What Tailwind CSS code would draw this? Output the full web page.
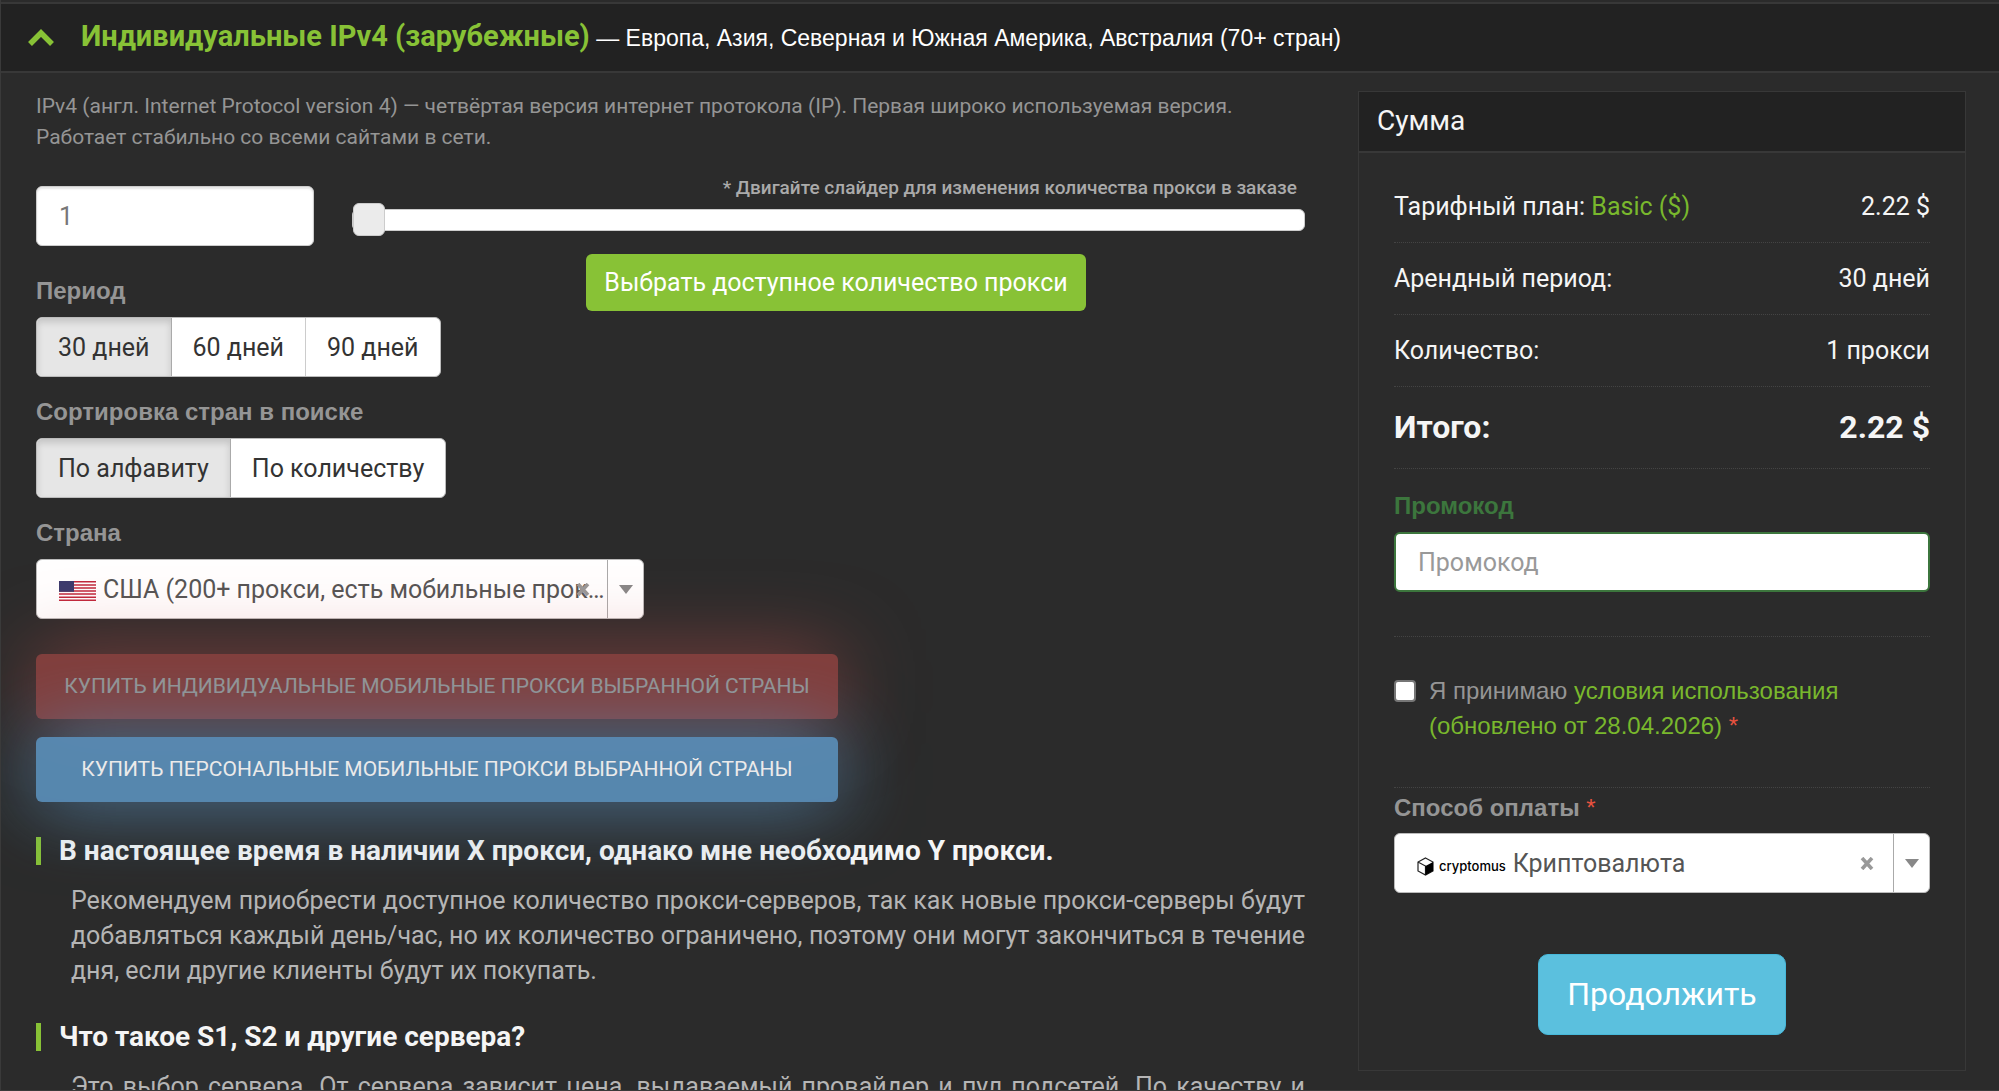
<!DOCTYPE html>
<html lang="ru">
<head>
<meta charset="utf-8">
<title>Индивидуальные IPv4</title>
<script src="https://cdn.jsdelivr.net/npm/@tailwindcss/browser@4"></script>
</head>
<body class="bg-[#2b2b2b] font-['Roboto','Liberation_Sans',sans-serif] text-[25px] leading-[35px] text-[#959595]">
<main class="h-screen overflow-hidden border-l border-b border-[#3a3a3a] pt-[2px]">
  <header class="flex h-[71px] items-center border-y-2 border-[#383838] bg-[#222] pl-[27px] text-white">
    <svg class="mr-[27px] h-[17px] w-[26px]" viewBox="0 0 26 17"><path d="M2 15 13 4 24 15" fill="none" stroke="#88c236" stroke-width="5.5"/></svg>
    <h1 class="font-['Liberation_Sans',sans-serif] text-[23px]"><span class="font-['Roboto',sans-serif] text-[29px] font-bold text-[#88c236]">Индивидуальные IPv4 (зарубежные)</span> — Европа, Азия, Северная и Южная Америка, Австралия (70+ стран)</h1>
  </header>
  <div class="flex items-start gap-[53px] pl-[35px] pr-[33px] pt-[18px]">
    <section class="min-w-0 flex-1">
      <p class="text-[21px] leading-[31px]">IPv4 (англ. Internet Protocol version 4) — четвёртая версия интернет протокола (IP). Первая широко используемая версия.<br>Работает стабильно со всеми сайтами в сети.</p>
      <div class="mt-[33px] flex items-start gap-[38px]">
        <input aria-label="Количество прокси" value="1" class="h-[60px] w-[278px] rounded-[6px] border border-[#ccc] bg-white px-[22px] text-[#777] shadow-[inset_0_2px_2px_rgba(0,0,0,0.1)]">
        <div class="-mt-[13px] flex flex-1 flex-col">
          <label for="amount" class="pr-[8px] text-right text-[19px] font-medium leading-[30px] text-[#aaa]">* Двигайте слайдер для изменения количества прокси в заказе</label>
          <input id="amount" type="range" min="1" max="200" value="1" class="h-[33px] w-full appearance-none bg-transparent [&::-webkit-slider-runnable-track]:h-[22px] [&::-webkit-slider-runnable-track]:rounded-[6px] [&::-webkit-slider-runnable-track]:border [&::-webkit-slider-runnable-track]:border-[#ccc] [&::-webkit-slider-runnable-track]:bg-white [&::-webkit-slider-thumb]:-mt-[7px] [&::-webkit-slider-thumb]:h-[33px] [&::-webkit-slider-thumb]:w-[32px] [&::-webkit-slider-thumb]:appearance-none [&::-webkit-slider-thumb]:rounded-[6px] [&::-webkit-slider-thumb]:border [&::-webkit-slider-thumb]:border-[#ccc] [&::-webkit-slider-thumb]:bg-[#ebebeb]">
          <div class="mt-[18px] flex justify-center pl-[15px]"><button class="h-[57px] rounded-[6px] bg-[#88c236] px-[18px] text-white">Выбрать доступное количество прокси</button></div>
        </div>
      </div>
      <div class="-mt-[38px]">
        <h2 class="font-['Liberation_Sans',sans-serif] text-[24px] font-bold">Период</h2>
        <div class="mt-[9px] flex h-[60px] w-fit overflow-hidden rounded-[6px] border border-[#bbb] bg-white text-[#333]">
          <button class="border-r border-[#aaa] bg-[#e6e6e6] px-[21px] shadow-[inset_0_4px_7px_rgba(0,0,0,0.15)]">30 дней</button>
          <button class="border-r border-[#ccc] px-[21px]">60 дней</button>
          <button class="px-[21px]">90 дней</button>
        </div>
        <h2 class="mt-[17px] font-['Liberation_Sans',sans-serif] text-[24px] font-bold">Сортировка стран в поиске</h2>
        <div class="mt-[9px] flex h-[60px] w-fit overflow-hidden rounded-[6px] border border-[#bbb] bg-white text-[#333]">
          <button class="border-r border-[#aaa] bg-[#e6e6e6] px-[21px] shadow-[inset_0_4px_7px_rgba(0,0,0,0.15)]">По алфавиту</button>
          <button class="px-[21px]">По количеству</button>
        </div>
        <h2 class="mt-[17px] font-['Liberation_Sans',sans-serif] text-[24px] font-bold">Страна</h2>
        <div class="relative mt-[9px] flex h-[60px] w-[608px] items-center rounded-[6px] border border-[#bbb] bg-white pl-[22px] text-[#555]">
          <svg class="mr-[7px] mt-[3px] h-[20px] w-[37px] shrink-0" viewBox="0 0 37 20" preserveAspectRatio="none"><path fill="#fff" d="M0 0h37v20H0z"/><path stroke="#c0283c" stroke-width="1.54" d="M0 .8h37M0 3.9h37M0 6.9h37M0 10h37M0 13.1h37M0 16.2h37M0 19.2h37"/><path fill="#3c3b6e" d="M0 0h15v10.8H0z"/></svg>
          <select aria-label="Страна" class="h-full w-[504px] appearance-none overflow-hidden text-ellipsis whitespace-nowrap"><option>США (200+ прокси, есть мобильные прокси)</option></select>
          <button aria-label="Очистить" class="absolute left-[539px] top-0 flex h-[58px] w-[14px] items-center"><svg class="h-[13px] w-[14px]" viewBox="0 0 14 13"><path d="m2 1 10 11M12 1 2 12" stroke="#999" stroke-width="3.6"/></svg></button>
          <span class="pointer-events-none absolute inset-y-0 right-0 flex w-[36px] items-center justify-center border-l border-[#aaa]"><svg class="h-[9px] w-[14px]" viewBox="0 0 14 9"><path d="M0 0h14L7 9z" fill="#888"/></svg></span>
        </div>
      </div>
      <button class="relative mt-[35px] block h-[65px] w-[802px] rounded-[6px] bg-[#d9534f] text-[21px] text-white opacity-50 shadow-[0_0_80px_#d9534f]">КУПИТЬ ИНДИВИДУАЛЬНЫЕ МОБИЛЬНЫЕ ПРОКСИ ВЫБРАННОЙ СТРАНЫ</button>
      <button class="relative mt-[18px] block h-[65px] w-[802px] rounded-[6px] bg-[#5b91bd] text-[21px] text-white opacity-90 shadow-[0_0_80px_rgba(91,145,189,0.9)]">КУПИТЬ ПЕРСОНАЛЬНЫЕ МОБИЛЬНЫЕ ПРОКСИ ВЫБРАННОЙ СТРАНЫ</button>
      <h3 class="mt-[35px] border-l-[5px] border-[#88c236] pl-[18px] text-[28px] font-bold leading-[28px] text-[#f5f5f5]">В настоящее время в наличии X прокси, однако мне необходимо Y прокси.</h3>
      <p class="mt-[18px] pl-[35px] text-justify text-[#b5b5b5]">Рекомендуем приобрести доступное количество прокси-серверов, так как новые прокси-серверы будут добавляться каждый день/час, но их количество ограничено, поэтому они могут закончиться в течение дня, если другие клиенты будут их покупать.</p>
      <h3 class="mt-[35px] border-l-[5px] border-[#88c236] pl-[18px] text-[28px] font-bold leading-[28px] text-[#f5f5f5]">Что такое S1, S2 и другие сервера?</h3>
      <p class="mt-[18px] pl-[35px] text-justify text-[#b5b5b5]">Это выбор сервера. От сервера зависит цена, выдаваемый провайдер и пул подсетей. По качеству и скорости работы серверы не отличаются друг от друга.</p>
    </section>
    <aside class="w-[608px] border border-[#383838]">
      <h2 class="h-[61px] border-b-2 border-[#383838] bg-[#222] pl-[18px] text-[28px] leading-[58px] text-[#f5f5f5]">Сумма</h2>
      <div class="px-[35px] pt-[18px] text-[#f5f5f5]">
        <div class="flex h-[72px] items-center justify-between border-b border-dotted border-[#444]"><span>Тарифный план: <a href="#" class="text-[#79b82d]">Basic ($)</a></span><span>2.22 $</span></div>
        <div class="flex h-[72px] items-center justify-between border-b border-dotted border-[#444]"><span>Арендный период:</span><span>30 дней</span></div>
        <div class="flex h-[72px] items-center justify-between border-b border-dotted border-[#444]"><span>Количество:</span><span>1 прокси</span></div>
        <div class="flex h-[82px] items-center justify-between border-b border-dotted border-[#444] text-[32px] font-bold"><span>Итого:</span><span>2.22 $</span></div>
        <div class="h-[168px] border-b border-dotted border-[#444] pt-[19px]">
          <label for="promo" class="block font-['Liberation_Sans',sans-serif] text-[24px] font-bold text-[#3c763d]">Промокод</label>
          <input id="promo" placeholder="Промокод" class="mt-[9px] h-[60px] w-full rounded-[6px] border-2 border-[#3c763d] bg-white px-[22px] text-[#555] placeholder:text-[#999]">
        </div>
        <div class="flex h-[151px] items-start gap-[13px] border-b border-dotted border-[#444] pt-[36px] font-['Liberation_Sans',sans-serif] text-[24px] text-[#959595]">
          <input id="terms" type="checkbox" class="mt-[7px] size-[22px] shrink-0 appearance-none rounded-[4px] border-2 border-[#767676] bg-white checked:bg-[#88c236]">
          <label for="terms">Я принимаю <a href="#" class="text-[#79b82d]">условия использования<br>(обновлено от 28.04.2026)</a> <span class="text-[#e8523f]">*</span></label>
        </div>
        <label for="pay" class="mt-[2px] block font-['Liberation_Sans',sans-serif] text-[24px] font-bold text-[#959595]">Способ оплаты <span class="font-normal text-[#e8523f]">*</span></label>
        <div class="relative mt-[8px] flex h-[60px] items-center rounded-[6px] border border-[#bbb] bg-white pl-[22px] text-[#555]">
          <svg class="mt-[6px] h-[19px] w-[17px]" viewBox="0 0 17 19"><path d="M8.500 1 16 5v9l-7.500 4L1 14V5zM1 5l7.500 4v9" fill="#fff" stroke="#222" stroke-width="1.200"/><path d="M8.500 9 16 5v9l-7.500 4z" fill="#000"/></svg>
          <span class="ml-[5px] mr-[7px] mt-[6px] font-['Inter',sans-serif] text-[13px] font-medium text-black">cryptomus</span>
          <select id="pay" class="h-full flex-1 appearance-none"><option>Криптовалюта</option></select>
          <button aria-label="Очистить" class="mr-[55px]"><svg class="h-[13px] w-[14px]" viewBox="0 0 14 13"><path d="m2 1 10 11M12 1 2 12" stroke="#999" stroke-width="3.6"/></svg></button>
          <span class="pointer-events-none absolute inset-y-0 right-0 flex w-[36px] items-center justify-center border-l border-[#aaa]"><svg class="h-[9px] w-[14px]" viewBox="0 0 14 9"><path d="M0 0h14L7 9z" fill="#888"/></svg></span>
        </div>
        <div class="flex justify-center pb-[35px] pt-[61px]"><button class="h-[81px] rounded-[10px] border border-[#46b8da] bg-[#5bc0de] px-[28px] text-[32px] text-white">Продолжить</button></div>
      </div>
    </aside>
  </div>
</main>
</body>
</html>
